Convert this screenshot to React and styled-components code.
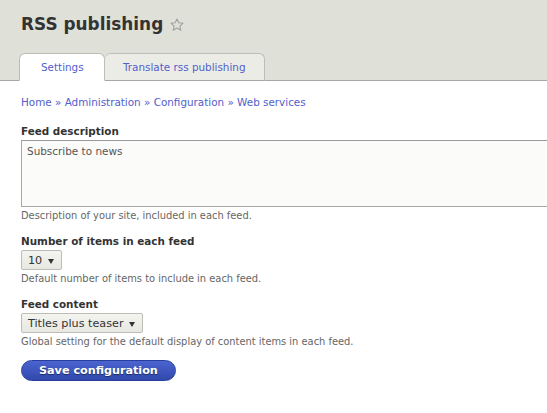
import React from "react";
import styled, { createGlobalStyle } from "styled-components";

const GlobalStyle = createGlobalStyle`
  html, body {
    margin: 0;
    padding: 0;
    background: #fff;
    overflow: hidden;
  }
  body {
    font-family: "DejaVu Sans", Verdana, sans-serif;
    font-size: 10.4px;
    color: #333;
  }
`;

const Page = styled.div`
  width: 547px;
  height: 413px;
  overflow: hidden;
`;

const Header = styled.header`
  background: #dfe0d8;
  border-bottom: 1px solid #a6a6a6;
  padding: 10px 0 0 21px;
`;

const Title = styled.h1`
  margin: 0;
  font-size: 16.9px;
  font-weight: bold;
  color: #333;
  display: flex;
  align-items: center;
  gap: 6px;
  height: 28px;
`;

const Star = styled.svg`
  width: 16px;
  height: 16px;
  margin-top: 1px;
`;

const Tabs = styled.ul`
  list-style: none;
  margin: 15px 0 -1px -2px;
  padding: 0;
  display: flex;
`;

const Tab = styled.li`
  height: 26px;
  display: flex;
  align-items: center;
  font-size: 10.4px;
  color: #5160cc;
  border: 1px solid #bdbdb6;
  border-bottom: ${(p) => (p.$active ? "1px solid #fff" : "1px solid #a6a6a6")};
  border-radius: 6px 6px 0 0;
  background: ${(p) => (p.$active ? "#fff" : "#ecece6")};
  ${(p) => (p.$active ? "padding: 0 20px 0 21px; width: 43px;" : "border-left: none; padding: 0 18px 0 18px;")}
`;

const Content = styled.main`
  padding: 14px 0 0 21px;
`;

const Breadcrumb = styled.nav`
  line-height: 14px;
  color: #5160cc;
  margin-bottom: 15px;
`;

const Field = styled.div`
  margin-bottom: 11px;
`;

const Label = styled.label`
  display: block;
  font-weight: bold;
  line-height: 14px;
  color: #333;
  margin-bottom: 2px;
`;

const TextArea = styled.div`
  width: 540px;
  box-sizing: border-box;
  height: 67px;
  border: 1px solid #a8a8a8;
  border-top-color: #999;
  background: #fbfbf9;
  padding: 3px 5px;
  font-size: 10.45px;
  line-height: 14px;
  color: #555;
`;

const Select = styled.div`
  display: inline-flex;
  align-items: center;
  box-sizing: border-box;
  height: 20px;
  padding: 0 7px 0 6px;
  gap: ${(p) => p.$gap}px;
  border: 1px solid #bdbdb6;
  border-radius: 2px;
  background: linear-gradient(#f4f4f0, #e8e8e2);
  font-size: 11.2px;
  color: #333;
`;

const Arrow = styled.span`
  width: 0;
  height: 0;
  border-left: 3.5px solid transparent;
  border-right: 3.5px solid transparent;
  border-top: 5px solid #333;
  margin-top: 2px;
`;

const Description = styled.div`
  font-size: 9.9px;
  line-height: 14px;
  color: #666;
  margin-top: 2px;
`;

const Button = styled.button`
  font-family: "DejaVu Sans", Verdana, sans-serif;
  font-size: 11.2px;
  font-weight: bold;
  color: #fff;
  text-shadow: 0 1px 1px rgba(0, 0, 0, 0.5);
  background: linear-gradient(#4b64cf, #3149ad);
  border: 1px solid #283e9c;
  border-radius: 11px;
  padding: 0 17px;
  height: 21px;
  margin-top: 0;
  cursor: pointer;
`;

export default function App() {
  return (
    <Page>
      <GlobalStyle />
      <Header>
        <Title>
          RSS publishing
          <Star viewBox="0 0 24 24">
            <path
              d="M12 2.8l2.7 5.9 6.4.6-4.8 4.3 1.4 6.3L12 16.6l-5.7 3.3 1.4-6.3-4.8-4.3 6.4-.6z"
              fill="none"
              stroke="#a0a09a"
              strokeWidth="1.6"
              strokeLinejoin="round"
            />
          </Star>
        </Title>
        <Tabs>
          <Tab $active>Settings</Tab>
          <Tab>Translate rss publishing</Tab>
        </Tabs>
      </Header>
      <Content>
        <Breadcrumb>Home » Administration » Configuration » Web services</Breadcrumb>
        <Field>
          <Label>Feed description</Label>
          <TextArea>Subscribe to news</TextArea>
          <Description>Description of your site, included in each feed.</Description>
        </Field>
        <Field>
          <Label>Number of items in each feed</Label>
          <Select $gap={6}>
            10 <Arrow />
          </Select>
          <Description>Default number of items to include in each feed.</Description>
        </Field>
        <Field>
          <Label>Feed content</Label>
          <Select $gap={6}>
            Titles plus teaser <Arrow />
          </Select>
          <Description>Global setting for the default display of content items in each feed.</Description>
        </Field>
        <Button>Save configuration</Button>
      </Content>
    </Page>
  );
}
